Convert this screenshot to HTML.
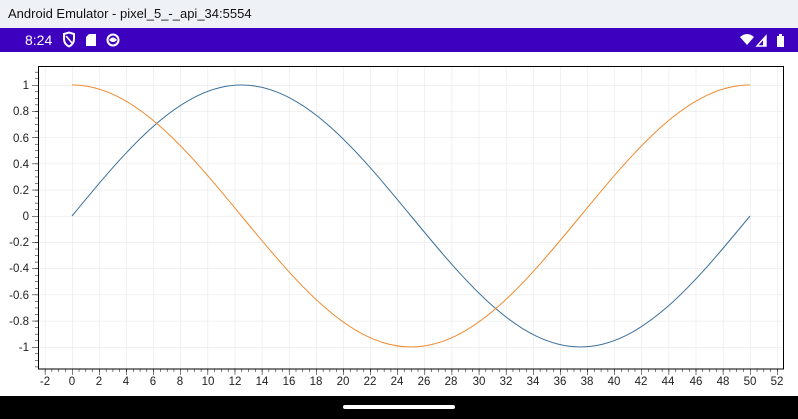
<!DOCTYPE html>
<html><head><meta charset="utf-8"><style>
body{margin:0;width:798px;height:419px;overflow:hidden;background:#fff;font-family:"Liberation Sans",sans-serif;position:relative}
#title{position:absolute;left:0;top:0;width:798px;height:28px;background:#eef2f7;font-size:13px;color:#111}
#title span{position:absolute;left:8px;top:6px}
#status{position:absolute;left:0;top:28px;width:798px;height:24px;background:#3d00bf;color:#fff}
#nav{position:absolute;left:0;top:396px;width:798px;height:23px;background:#000}
#nav div{position:absolute;left:343px;top:9px;width:112px;height:4px;border-radius:2px;background:#fff}
svg text{font-family:"Liberation Sans",sans-serif;font-size:11.5px;fill:#222}
</style></head><body>
<div id="title"><span>Android Emulator - pixel_5_-_api_34:5554</span></div>
<div id="status">
<span style="position:absolute;left:25px;top:4px;font-size:14px">8:24</span>
<svg width="798" height="24" style="position:absolute;left:0;top:0">
<path d="M64,6 L69,4.5 L74,6 L74,11 Q74,16 69,18.5 Q64,16 64,11 Z" fill="none" stroke="#fff" stroke-width="2"/>
<line x1="66" y1="8" x2="72" y2="15" stroke="#fff" stroke-width="1.6"/>
<path d="M89,6 L96,6 L96,18 L86,18 L86,9 Z" fill="#fff"/>
<circle cx="113" cy="12" r="5.5" fill="none" stroke="#fff" stroke-width="2"/>
<path d="M109,12 Q113,7 117,12 Q113,16 109,12Z" fill="#fff"/>
<path d="M740,9 Q747,3 754,9 L747,17 Z" fill="#fff"/>
<path d="M757,18 L766,8 L766,18 Z" fill="none" stroke="#fff" stroke-width="1.4"/>
<path d="M763,12 L766,9 L766,18 L763,18Z" fill="#fff"/>
<rect x="777" y="8" width="7" height="11" fill="#fff"/><rect x="779" y="6" width="3" height="2" fill="#fff"/>
</svg></div>
<svg width="798" height="344" style="position:absolute;left:0;top:52px" viewBox="0 52 798 344">
<defs>
<pattern id="vg" patternUnits="userSpaceOnUse" x="44.88" y="0" width="27.12" height="400"><line x1="0" y1="0" x2="0" y2="400" stroke="#e3e3e3" stroke-width="1"/></pattern>
<pattern id="hg" patternUnits="userSpaceOnUse" x="0" y="85" width="800" height="26.2"><line x1="0" y1="0" x2="800" y2="0" stroke="#e3e3e3" stroke-width="1"/></pattern>
<pattern id="ymin" patternUnits="userSpaceOnUse" x="0" y="85" width="40" height="6.55"><line x1="35" y1="0" x2="38" y2="0" stroke="#000" stroke-width="1"/></pattern>
<pattern id="ymaj" patternUnits="userSpaceOnUse" x="0" y="85" width="40" height="26.2"><line x1="32" y1="0" x2="38" y2="0" stroke="#000" stroke-width="1"/></pattern>
<pattern id="xmin" patternUnits="userSpaceOnUse" x="44.88" y="0" width="6.78" height="400"><line x1="0" y1="369" x2="0" y2="372" stroke="#000" stroke-width="1"/></pattern>
<pattern id="xmaj" patternUnits="userSpaceOnUse" x="44.88" y="0" width="27.12" height="400"><line x1="0" y1="369" x2="0" y2="375" stroke="#000" stroke-width="1"/></pattern>
</defs>
<rect x="38" y="66" width="746" height="303" fill="url(#vg)"/>
<rect x="38" y="66" width="746" height="303" fill="url(#hg)"/>
<rect x="30" y="68" width="8" height="300" fill="url(#ymin)"/>
<rect x="30" y="68" width="8" height="300" fill="url(#ymaj)"/>
<rect x="40" y="369" width="743" height="8" fill="url(#xmin)"/>
<rect x="40" y="369" width="743" height="8" fill="url(#xmaj)"/>
<rect x="38.5" y="66.5" width="745" height="302.5" fill="none" stroke="#000" stroke-width="1"/>
<path d="M72,216 C127.3,148.9 180.15,85 241.5,85 C302.85,85 355.7,148.9 411,216 C466.3,283.1 519.15,347 580.5,347 C641.85,347 694.7,283.1 750,216" fill="none" stroke="#3b6f9c" stroke-width="1"/>
<path d="M72,85 C133.35,85 186.2,148.9 241.5,216 C296.8,283.1 349.65,347 411,347 C472.35,347 525.2,283.1 580.5,216 C635.8,148.9 688.65,85 750,85" fill="none" stroke="#f08a30" stroke-width="1"/>
<g text-anchor="end">
<text x="29" y="89">1</text><text x="29" y="115">0.8</text><text x="29" y="142">0.6</text><text x="29" y="168">0.4</text><text x="29" y="194">0.2</text><text x="29" y="220">0</text><text x="29" y="246">-0.2</text><text x="29" y="272">-0.4</text><text x="29" y="299">-0.6</text><text x="29" y="325">-0.8</text><text x="29" y="351">-1</text>
</g>
<g text-anchor="middle">
<text x="45" y="385">-2</text><text x="72" y="385">0</text><text x="99" y="385">2</text><text x="126" y="385">4</text><text x="153" y="385">6</text><text x="180" y="385">8</text><text x="208" y="385">10</text><text x="235" y="385">12</text><text x="262" y="385">14</text><text x="289" y="385">16</text><text x="316" y="385">18</text><text x="343" y="385">20</text><text x="370" y="385">22</text><text x="397" y="385">24</text><text x="424" y="385">26</text><text x="451" y="385">28</text><text x="479" y="385">30</text><text x="506" y="385">32</text><text x="533" y="385">34</text><text x="560" y="385">36</text><text x="587" y="385">38</text><text x="614" y="385">40</text><text x="641" y="385">42</text><text x="668" y="385">44</text><text x="696" y="385">46</text><text x="723" y="385">48</text><text x="750" y="385">50</text><text x="777" y="385">52</text>
</g>
</svg>
<div id="nav"><div></div></div>
</body></html>
